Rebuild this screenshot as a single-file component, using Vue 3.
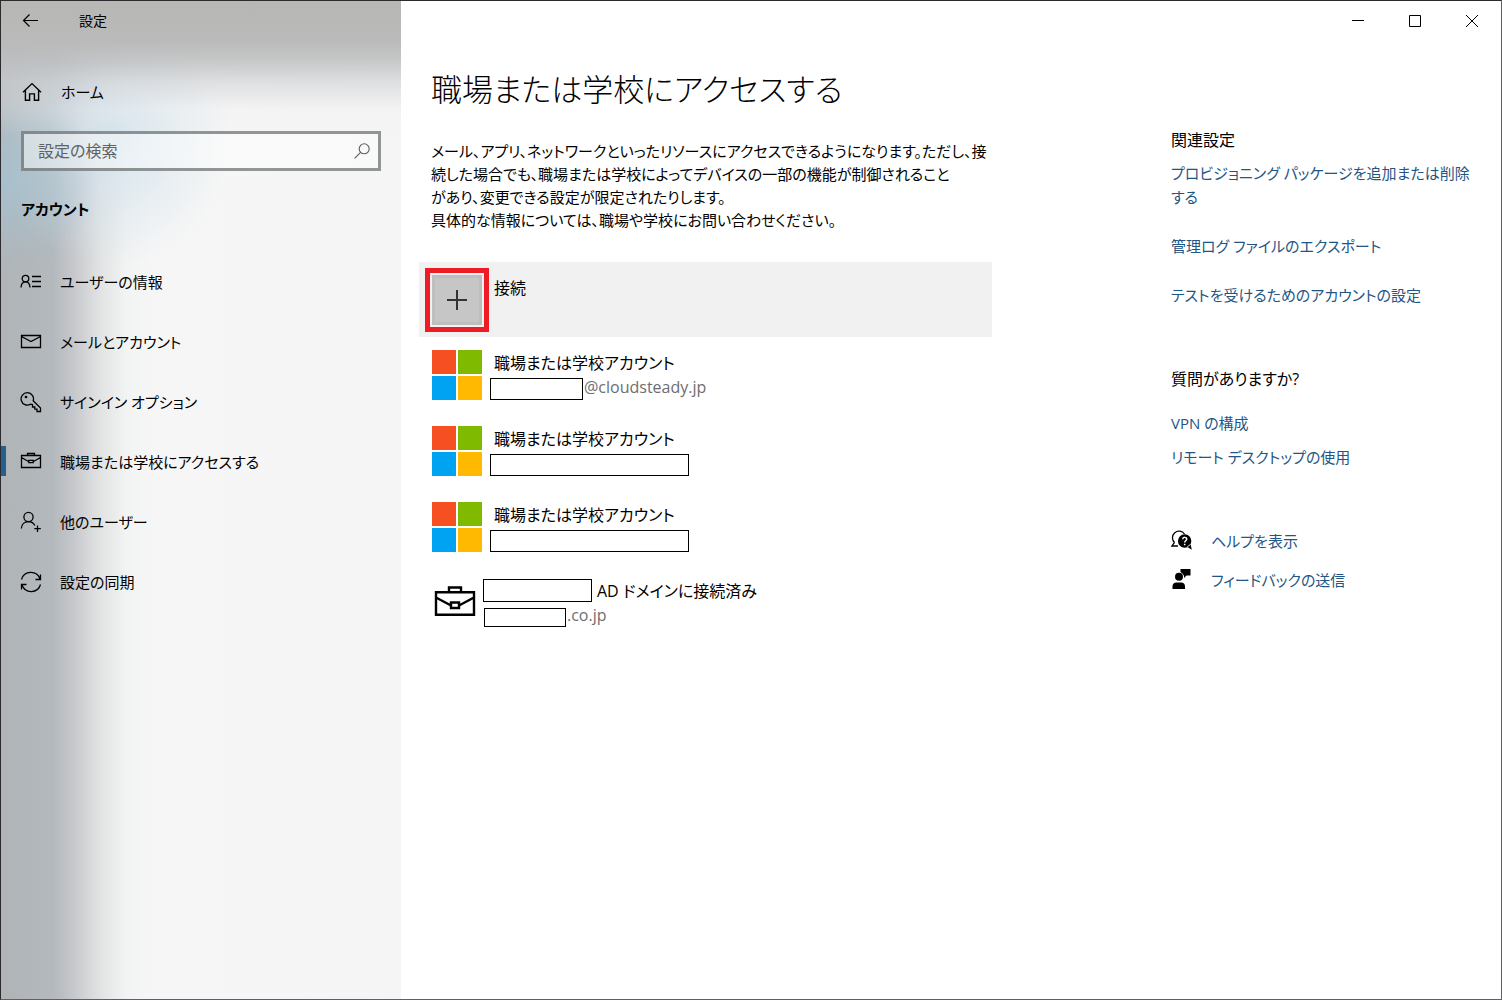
<script setup>
import { ref } from 'vue'

const query = ref('')
const current = ref('work')

const navItems = [
  { id: 'info', label: 'ユーザーの情報' },
  { id: 'mail', label: 'メールとアカウント' },
  { id: 'signin', label: 'サインイン オプション' },
  { id: 'work', label: '職場または学校にアクセスする' },
  { id: 'others', label: '他のユーザー' },
  { id: 'sync', label: '設定の同期' },
]

const accounts = [
  { id: 1, mask: 93, suffix: '@cloudsteady.jp' },
  { id: 2, mask: 199, suffix: '' },
  { id: 3, mask: 199, suffix: '' },
]

const description = [
  'メール、アプリ、ネットワークといったリソースにアクセスできるようになります。ただし、接',
  '続した場合でも、職場または学校によってデバイスの一部の機能が制御されること',
  'があり、変更できる設定が限定されたりします。',
  '具体的な情報については、職場や学校にお問い合わせください。',
]
</script>

<template>
  <div class="window">
    <nav class="sidebar">
      <header class="titlebar">
        <button class="back" aria-label="戻る">
          <svg width="16" height="14" viewBox="0 0 16 14" fill="none" stroke="currentColor" stroke-width="1.2">
            <path d="M16 6.500H1.500M7.500.5l-6 6 6 6" />
          </svg>
        </button>
        <span class="app-name">設定</span>
      </header>

      <a class="home" href="#">
        <svg width="20" height="20" viewBox="0 0 20 20" fill="none" stroke="currentColor" stroke-width="1.4">
          <path d="M1 10.3L10 1.6l9 8.7M3.4 8.4v9.9h4.2v-6.4h4.8v6.4h4.2V8.4" />
        </svg>
        <span>ホーム</span>
      </a>

      <label class="search">
        <input v-model="query" type="text" placeholder="設定の検索" aria-label="設定の検索" />
        <svg width="16" height="16" viewBox="0 0 16 16" fill="none" stroke="currentColor" stroke-width="1.1">
          <circle cx="10.2" cy="5.8" r="5" />
          <path d="M6.6 9.4L.6 15.4" />
        </svg>
      </label>

      <h2 class="section">アカウント</h2>

      <ul class="nav">
        <li v-for="item in navItems" :key="item.id">
          <a href="#" :class="{ active: item.id === current }" @click.prevent="current = item.id">
            <svg width="22" height="22" viewBox="0 0 22 22" fill="none" stroke="currentColor" stroke-width="1.3">
              <template v-if="item.id === 'info'">
                <circle cx="5.5" cy="7.6" r="3.3" />
                <path d="M1 16.5c.2-3.300 2-5.600 4.500-5.600s4.300 2.300 4.500 5.600M12 5.500h9M12 10.500h9M12 15.500h9" />
              </template>
              <template v-else-if="item.id === 'mail'">
                <path d="M1.500 4.500h19v12h-19zM1.500 5.500L11 10.500l9.500-5" />
              </template>
              <template v-else-if="item.id === 'signin'">
                <path d="M10.500 13.200A6.200 6.200 0 1 1 13.200 9.800L20.500 17v3.500h-3.500v-2.300h-2.200v-2.200h-2.300v-2.400z" />
                <circle cx="6" cy="6" r=".7" fill="currentColor" />
              </template>
              <template v-else-if="item.id === 'work'">
                <path d="M1.500 4.500h19v12h-19zM7.500 4.500v-2h7v2M1.500 6.500l7 4M20.500 6.500l-7 4M8.800 9.300h4.400v2.400H8.800z" />
              </template>
              <template v-else-if="item.id === 'others'">
                <circle cx="8.500" cy="6" r="4.600" />
                <path d="M1.300 17.500c.3-4 3.200-6.900 7.200-6.900 3 0 5.200 1.500 6.400 3.900M17.500 14.500v6.500M14.300 17.700h6.500" />
              </template>
              <template v-else>
                <path d="M1.500 8.500A9.700 9.700 0 0 1 20 8M20.500 3.500V8.500h-5M20.500 13.500A9.700 9.700 0 0 1 2 14M1.500 18.500V13.500h5" />
              </template>
            </svg>
            <span>{{ item.label }}</span>
          </a>
        </li>
      </ul>
    </nav>

    <div class="page">
      <div class="caption">
        <button aria-label="最小化">
          <svg width="12" height="12" viewBox="0 0 12 12" fill="none" stroke="currentColor"><path d="M0 5.500h12" /></svg>
        </button>
        <button aria-label="最大化">
          <svg width="12" height="12" viewBox="0 0 12 12" fill="none" stroke="currentColor"><path d="M.5.5h11v11H.5z" /></svg>
        </button>
        <button aria-label="閉じる">
          <svg width="12" height="12" viewBox="0 0 12 12" fill="none" stroke="currentColor"><path d="M0 0l12 12M12 0L0 12" /></svg>
        </button>
      </div>

      <div class="columns">
        <main class="content">
          <h1>職場または学校にアクセスする</h1>
          <p class="description">
            <span v-for="line in description" :key="line">{{ line }}</span>
          </p>

          <button class="row connect">
            <span class="tile">
              <svg width="20" height="20" viewBox="0 0 20 20" stroke="currentColor" stroke-width="2"><path d="M10 0v20M0 10h20" /></svg>
            </span>
            <span class="details">接続</span>
          </button>

          <ul class="accounts">
            <li v-for="account in accounts" :key="account.id" class="row">
              <svg width="50" height="50" viewBox="0 0 50 50">
                <path fill="#f65022" d="M0 0h24v24H0z" />
                <path fill="#7fba00" d="M26 0h24v24H26z" />
                <path fill="#00a3f1" d="M0 26h24v24H0z" />
                <path fill="#ffb901" d="M26 26h24v24H26z" />
              </svg>
              <div class="details">
                <div class="name">職場または学校アカウント</div>
                <div class="address">
                  <span class="mask" :style="{ width: account.mask + 'px' }"></span>{{ account.suffix }}
                </div>
              </div>
            </li>
            <li class="row domain">
              <svg width="50" height="50" viewBox="0 0 50 50" fill="none" stroke="#000" stroke-width="2.400">
                <path d="M4 14.200h38v22.500H4zM17 14v-4.500h12V14M4 19.500l15 8M42 19.500l-15 8M19 24.500h8v5.500h-8z" />
              </svg>
              <div class="details">
                <div class="name"><span class="mask wide"></span>AD ドメインに接続済み</div>
                <div class="address"><span class="mask narrow"></span>.co.jp</div>
              </div>
            </li>
          </ul>
        </main>

        <aside class="related">
          <h3>関連設定</h3>
          <ul class="links">
            <li><a href="#">プロビジョニング パッケージを追加または削除する</a></li>
            <li><a href="#">管理ログ ファイルのエクスポート</a></li>
            <li><a href="#">テストを受けるためのアカウントの設定</a></li>
          </ul>
          <h3>質問がありますか?</h3>
          <ul class="links questions">
            <li><a href="#">VPN の構成</a></li>
            <li><a href="#">リモート デスクトップの使用</a></li>
          </ul>
          <ul class="support">
            <li>
              <svg width="22" height="22" viewBox="0 0 22 22">
                <path d="M3.500 12.500A6.600 6.600 0 1 1 13.500 4M3.500 12.300L1 16h6" fill="none" stroke="#000" stroke-width="1.300" />
                <path d="M13.700 4.300a6.700 6.700 0 1 1-.1 13.400 6.700 6.700 0 0 1 .1-13.400zM16 16.800l4.800 3-1.300-6z" fill="#000" />
                <path d="M11.700 9.200c.2-2.600 4.200-2.300 4 .1-.1 1.500-2 1.500-2 3.200M13.700 13.700v1.500" fill="none" stroke="#fff" stroke-width="1.500" />
              </svg>
              <a href="#">ヘルプを表示</a>
            </li>
            <li>
              <svg width="22" height="22" viewBox="0 0 22 22">
                <path d="M9.500 0h10v6.500h-4L13 9V6.500H9.500z" />
                <circle cx="8" cy="7.800" r="4.800" fill="#fff" />
                <circle cx="8" cy="7.800" r="4" />
                <path d="M1.500 20v-2.500c0-2.500 1.500-4 4-4h4.500c2.500 0 4 1.500 4 4V20z" />
              </svg>
              <a href="#">フィードバックの送信</a>
            </li>
          </ul>
        </aside>
      </div>
    </div>
  </div>
</template>

<style>
body {
  margin: 0;
}
</style>

<style scoped>
* {
  box-sizing: border-box;
}

.window {
  display: flex;
  min-height: 100vh;
  border: 1px solid #2b2b2d;
  border-right-color: #606062;
  border-bottom-color: #606062;
  background: #fff;
  color: #000;
  font: 16px/24px "Open Sans", "Noto Sans CJK JP", sans-serif;
  font-feature-settings: "palt";
}

ul,
h1,
h2,
h3,
p {
  margin: 0;
  padding: 0;
  list-style: none;
  font-weight: inherit;
}

button {
  padding: 0;
  border: 0;
  background: none;
  color: inherit;
  font: inherit;
  font-feature-settings: inherit;
  text-align: left;
}

a {
  color: #1f5685;
  font-size: 15px;
  text-decoration: none;
}

svg {
  flex: none;
}

.sidebar {
  flex: 0 0 400px;
  background:
    linear-gradient(#b7b7b5 0, #b9bab9 40px, rgba(190, 192, 193, 0.85) 60px, rgba(208, 210, 213, 0.6) 82px, rgba(235, 236, 238, 0.25) 108px, rgba(240, 240, 240, 0) 135px),
    radial-gradient(100px 90px at 0 180px, rgba(166, 194, 208, 0.85), rgba(166, 192, 206, 0)),
    radial-gradient(120px 130px at 110px 135px, rgba(210, 226, 236, 0.9), rgba(225, 236, 243, 0)),
    linear-gradient(90deg, #b0b4b7 0, #b3b9bd 52px, #c5c7cb 72px, #e2e4e4 100px, #f2f3f3 125px, #f6f6f6 150px, #f5f5f5 100%);
}

.titlebar {
  display: flex;
  align-items: center;
  height: 40px;
  padding-left: 21px;
}

.back {
  display: flex;
  width: 57px;
}

.app-name {
  font-size: 14px;
}

.home {
  display: flex;
  align-items: center;
  gap: 19px;
  margin-top: 21px;
  height: 60px;
  padding-left: 21px;
  color: #000;
}

.search {
  display: flex;
  align-items: center;
  height: 40px;
  margin: 9px 20px 0;
  padding: 0 8px 0 14px;
  border: 3px solid rgba(70, 75, 75, 0.58);
  background: rgba(255, 255, 255, 0.45);
  color: #5a5e60;
}

.search input {
  flex: 1;
  min-width: 0;
  padding: 0;
  border: 0;
  outline: 0;
  background: none;
  color: #000;
  font: inherit;
  font-feature-settings: inherit;
}

.search input::placeholder {
  color: #5f6365;
  opacity: 1;
}

.section {
  margin: 26px 20px 31px;
  font-size: 15px;
  font-weight: 700;
}

.nav a {
  position: relative;
  display: flex;
  align-items: center;
  gap: 18px;
  height: 60px;
  padding-left: 19px;
  color: #000;
}

.nav a.active::before {
  content: "";
  position: absolute;
  left: 0;
  top: 14px;
  width: 5px;
  height: 30px;
  background: #24608f;
}

.page {
  flex: 1;
  min-width: 0;
}

.caption {
  display: flex;
  justify-content: flex-end;
  height: 40px;
  padding-right: 1px;
}

.caption button {
  display: flex;
  align-items: center;
  justify-content: center;
  width: 57px;
}

.columns {
  display: flex;
  justify-content: space-between;
  gap: 28px;
  padding-right: 26px;
}

.content {
  flex: 0 1 591px;
  padding-left: 18px;
}

h1 {
  margin: 24px 12px 0;
  font-size: 31px;
  font-weight: 300;
  line-height: 48px;
  white-space: nowrap;
}

.description {
  margin: 27px 0 30px 12px;
  font-size: 15px;
  line-height: 23px;
  white-space: nowrap;
}

.description span {
  display: block;
}

.row {
  display: flex;
  gap: 12px;
  width: 100%;
  min-height: 76px;
  padding: 13px 13px 0;
}

.connect {
  min-height: 75px;
  background: #f1f1f1;
}

.details {
  padding-top: 1px;
}

.tile {
  position: relative;
  display: flex;
  align-items: center;
  justify-content: center;
  width: 50px;
  height: 50px;
  border: 3px solid #bebebe;
  background: #c6c6c6;
  color: #333;
}

.tile::after {
  content: "";
  position: absolute;
  inset: -10px;
  border: 5px solid #ee1c25;
}

.address {
  display: flex;
  color: #6e6e6e;
}

.mask {
  flex: none;
  height: 22px;
  margin: 3px 1px 0 -4px;
  border: 1px solid #000;
  background: #fff;
}

.name {
  display: flex;
}

.domain .mask {
  margin: 0 5px 0 -11px;
}

.mask.wide {
  width: 109px;
  height: 23px;
}

.domain .mask.narrow {
  width: 82px;
  height: 19px;
  margin: 5px 1px 0 -10px;
}

.related {
  flex: 0 0 304px;
  padding-top: 87px;
}

h3 {
  font-size: 16px;
}

.links {
  display: flex;
  flex-direction: column;
  gap: 25px;
  margin: 9px 0 60px;
}

.questions {
  gap: 10px;
  margin: 20px 0 52px;
}

.support li {
  display: flex;
  align-items: center;
  gap: 18px;
  height: 39px;
}
</style>
